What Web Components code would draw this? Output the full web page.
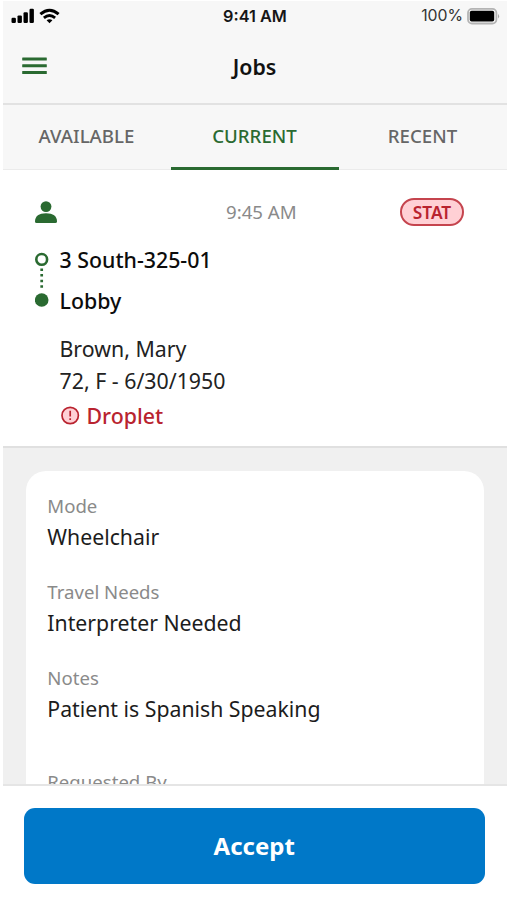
<!DOCTYPE html>
<html lang="en">
<head>
<meta charset="utf-8">
<title>Jobs</title>
<style>
  html, body { margin: 0; height: 100%; background: #fff; overflow: hidden; }
</style>
</head>
<body>
<job-screen></job-screen>
<script>
const define = (name, html) => customElements.define(name, class extends HTMLElement {
  constructor() {
    super();
    const t = document.createElement('template');
    t.innerHTML = html;
    this.attachShadow({ mode: 'open' }).append(t.content.cloneNode(true));
  }
});

define('status-bar', `
<style>
  :host { display: grid; grid-template-columns: 1fr auto 1fr; align-items: center; height: 31px; box-sizing: border-box; padding: 0 7px 1px 8px; font: 600 16.3px/20px Inter, "Liberation Sans", sans-serif; color: #161616; }
  svg { display: block; }
  .left { display: flex; align-items: center; gap: 5px; }
  .time { margin-right: 1px; }
  .right { display: flex; align-items: center; justify-content: flex-end; gap: 4px; font-weight: 400; font-size: 15.8px; color: #333; }
</style>
<div class="left">
  <svg width="23" height="16" viewBox="0 0 23 16" fill="#000"><rect x=".5" y="9.8" width="4.4" height="5.2" rx="1.2"/><rect x="6.5" y="7.4" width="4.4" height="7.6" rx="1.2"/><rect x="12.5" y="4.2" width="4.4" height="10.8" rx="1.2"/><rect x="18.5" y=".8" width="4.4" height="14.2" rx="1.2"/></svg>
  <svg width="21" height="16" viewBox="0 0 21 16" fill="none" stroke="#000"><path d="M1.4 6.2Q10.5-1.8 19.6 6.2" stroke-width="3"/><path d="M4.9 9.9Q10.5 5.2 16.1 9.9" stroke-width="2.8"/><path d="M7.6 12.3Q10.5 10.2 13.4 12.3L10.5 15.2Z" fill="#000" stroke="none"/></svg>
</div>
<span class="time">9:41 AM</span>
<div class="right"><span>100%</span>
  <svg width="33" height="17" viewBox="0 0 33 17"><rect x="1" y=".9" width="28.4" height="14.6" rx="4" fill="#f7f7f7" stroke="#b4b4b4" stroke-width="1.8"/><rect x="2.8" y="2.8" width="24.4" height="10.8" rx="1.8" fill="#000"/><path d="M31 6q2.2 2.2 0 4.6z" fill="#a8a8a8"/></svg>
</div>`);

define('app-header', `
<style>
  :host { display: grid; grid-template-columns: 1fr auto 1fr; align-items: center; height: 73px; box-sizing: border-box; padding: 0 20px 2px 19px; border-bottom: 2px solid #e2e2e2; }
  svg { display: block; margin-top: -2px; }
  h1 { margin: 0; font: 600 21.33px/30px "Noto Sans", sans-serif; color: #111; }
</style>
<svg width="26" height="18" viewBox="0 0 26 18" fill="#2a6a31"><rect x=".2" y=".5" width="24.6" height="3" rx=".5"/><rect x=".2" y="7.3" width="24.6" height="3" rx=".5"/><rect x=".2" y="14" width="24.6" height="3" rx=".5"/></svg>
<h1><slot></slot></h1>`);

define('tab-item', `
<style>
  :host { display: flex; align-items: center; justify-content: center; flex: 1; box-sizing: border-box; border-bottom: 1px solid #ebebeb; padding: 0 1px 2px 0; font: 500 18.67px/26px "Noto Sans", sans-serif; color: #666; }
  :host([selected]) { color: #2a6a31; border-bottom: 3px solid #2a6a31; padding-bottom: 0; }
</style>
<slot></slot>`);

define('tab-bar', `
<style>:host { display: flex; height: 65px; }</style>
<slot></slot>`);

define('status-pill', `
<style>
  :host { display: block; box-sizing: border-box; width: 64px; height: 28px; border: 2px solid #c5444e; border-radius: 14px; background: #ffd0d5; text-align: center; font: 600 17.33px/24px "Noto Sans", sans-serif; color: #b9232f; }
</style>
<slot></slot>`);

define('job-summary', `
<style>
  :host { display: block; height: 278px; box-sizing: border-box; border-bottom: 2px solid #e0e0e0; padding: 26px 43px 0 32px; background: #fff; font: 400 21.33px/32px "Noto Sans", sans-serif; color: #222; }
  svg { display: block; }
  .top { display: grid; grid-template-columns: 191px 1fr auto; align-items: center; height: 28px; }
  .time { font-size: 18.67px; color: #8a8a8a; }
  .route { display: grid; grid-template-columns: 14px 1fr; column-gap: 10.5px; margin-top: 21px; }
  .stops { margin-top: -6px; font-weight: 500; line-height: 41px; color: #0c0c0c; }
  .route svg { margin-top: 7px; }
  .patient { margin: 8px 0 0 24.5px; padding-top: 4px; }
  .alert { display: flex; align-items: center; gap: 7px; margin: 3px 0 0 25.5px; color: #b9232f; font-weight: 500; }
  .alert svg { margin-top: -2px; }
</style>
<div class="top">
  <svg width="23" height="23" viewBox="0 0 23 23" fill="#2a6a31"><circle cx="11" cy="5.6" r="5.4"/><path d="M0 20.5C0 15 4 12.2 11 12.2S22 15 22 20.5Q22 22 20.4 22H1.6Q0 22 0 20.5Z"/></svg>
  <span class="time">9:45 AM</span>
  <status-pill>STAT</status-pill>
</div>
<div class="route">
  <svg width="14" height="56" viewBox="0 0 14 56" fill="none"><circle cx="6.7" cy="7.4" r="5.4" stroke="#2a6a31" stroke-width="2.6"/><path d="M6.7 16.5V37.5" stroke="#2a6a31" stroke-width="2.7" stroke-dasharray="2.5 3.1"/><circle cx="6.7" cy="48" r="6.8" fill="#2a6a31"/></svg>
  <div class="stops"><div>3 South-325-01</div><div>Lobby</div></div>
</div>
<div class="patient"><div>Brown, Mary</div><div>72, F - 6/30/1950</div></div>
<div class="alert">
  <svg width="19" height="19" viewBox="0 0 19 19" fill="none"><circle cx="9.2" cy="9.5" r="8.2" fill="#ffd0d5" stroke="#b9232f" stroke-width="1.7"/><path d="M9.2 4.8V10.6M9.2 12.2V14" stroke="#b9232f" stroke-width="1.7"/></svg>
  <span>Droplet</span>
</div>`);

define('detail-field', `
<style>
  :host { display: block; height: 86px; font: 400 21.25px/32px "Noto Sans", sans-serif; color: #1c1c1c; }
  .label { padding-top: 1px; height: 31px; font-size: 18.6px; color: #8a8a8a; }
</style>
<div class="label"><slot name="label"></slot></div>
<div><slot></slot></div>`);

define('detail-panel', `
<style>
  :host { display: block; flex: 1; min-height: 0; overflow: hidden; background: #f0f0f0; padding: 23px 23px 0; }
  .card { height: 400px; border-radius: 20px; background: #fff; box-sizing: border-box; padding: 18px 21.3px 0; }
</style>
<div class="card"><slot></slot></div>`);

define('action-bar', `
<style>
  :host { display: block; height: 116px; box-sizing: border-box; border-top: 2px solid #e5e5e5; background: #fff; padding: 22px 21.5px 0 21.4px; }
  button { display: block; width: 460.6px; height: 75.5px; padding: 0 1px 0 0; border: 0; border-radius: 11px; background: #0078c8; color: #fff; font: 700 24px/34px "Noto Sans", sans-serif; }
</style>
<button><slot></slot></button>`);

define('job-screen', `
<style>
  :host { display: flex; flex-direction: column; height: 900px; box-sizing: border-box; padding: 1px 0 0 3px; background: #fff; }
  .head { background: #f7f7f7; }
  .last { margin-top: 18px; }
</style>
<div class="head">
  <status-bar></status-bar>
  <app-header>Jobs</app-header>
  <tab-bar><tab-item>AVAILABLE</tab-item><tab-item selected>CURRENT</tab-item><tab-item>RECENT</tab-item></tab-bar>
</div>
<job-summary></job-summary>
<detail-panel>
  <detail-field><span slot="label">Mode</span>Wheelchair</detail-field>
  <detail-field><span slot="label">Travel Needs</span>Interpreter Needed</detail-field>
  <detail-field><span slot="label">Notes</span>Patient is Spanish Speaking</detail-field>
  <detail-field class="last"><span slot="label">Requested By</span></detail-field>
</detail-panel>
<action-bar>Accept</action-bar>`);
</script>
</body>
</html>
